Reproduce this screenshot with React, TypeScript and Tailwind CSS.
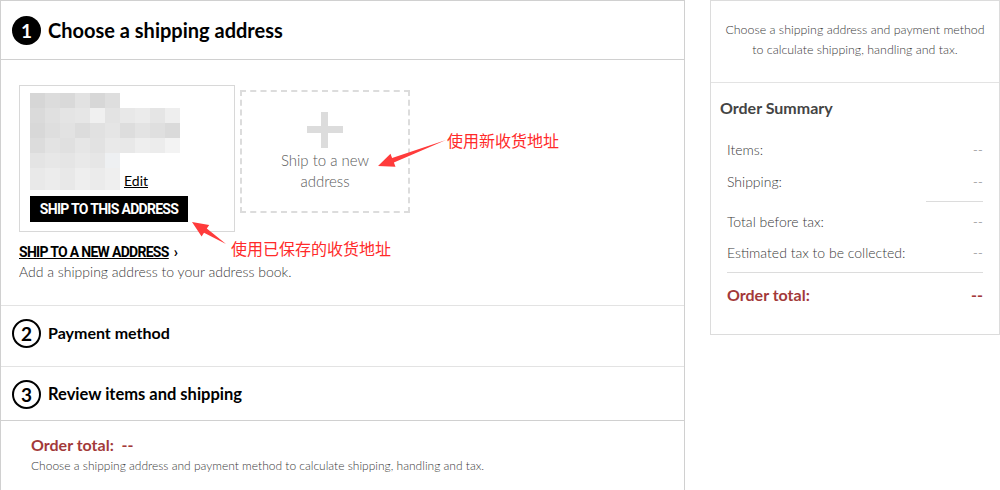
import React from "react";

const mosaicRows: string[][] = [
  ["#d6d6d6", "#dcdcdc", "#d9d9d9", "#e2e2e2", "#d7d7d7", "#dedede"],
  ["#dadada", "#e0e0e0", "#e4e4e4", "#e6e6e6", "#f0f0f0", "#e3e3e3", "#e8e8e8", "#ebebeb", "#e5e5e5", "#eeeeee"],
  ["#d8d8d8", "#dedede", "#e2e2e2", "#dcdcdc", "#e1e1e1", "#e5e5e5", "#dddddd", "#e3e3e3", "#dfdfdf", "#dadada"],
  ["#dcdcdc", "#e3e3e3", "#e0e0e0", "#e6e6e6", "#e2e2e2", "#e9e9e9", "#e8e8e8", "#eeeeee", "#ececec", "#f3f3f3"],
  ["#e4e4e4", "#e7e7e7", "#e5e5e5", "#e9e9e9", "#e6e6e6", "#eef0f2"],
  ["#e9e9e9", "#ececec", "#e8e8e8", "#eeeeee", "#ebebeb", "#efefef"],
];

const StepHeader = ({ n, title, filled, size }: { n: number; title: string; filled?: boolean; size: string }) => (
  <div className="flex flex-row items-center">
    <span
      className={`ml-[11px] flex h-[29px] w-[29px] items-center justify-center rounded-full text-[19px] font-bold leading-none ${
        filled ? "bg-black text-white" : "border-2 border-black text-black"
      }`}
    >
      {n}
    </span>
    <h2 className={`ml-[7px] font-bold text-black ${size}`}>{title}</h2>
  </div>
);

const SummaryRow = ({ label, className = "" }: { label: string; className?: string }) => (
  <div className={`flex flex-row justify-between text-[14px] font-light text-[#3a3a3a] ${className}`}>
    <span>{label}</span>
    <span className="text-[#777]">--</span>
  </div>
);

export default function App() {
  return (
    <div className="relative h-[490px] w-[1000px] overflow-hidden bg-white font-['Lato','Liberation_Sans',sans-serif]">
      <div className="flex flex-row items-start">
        {/* left column */}
        <div className="w-[685px] border-l border-r border-t border-[#d0d0d0]">
          <div className="flex h-[59px] items-center border-b border-[#d0d0d0]">
            <StepHeader n={1} title="Choose a shipping address" filled size="text-[20px]" />
          </div>

          <div className="h-[246px] border-b border-[#e3e3e3] pl-[18px] pt-[25px]">
            <div className="flex flex-row items-start">
              <div className="w-[216px] border border-[#d8d8d8] px-[10px] pb-[9px] pt-[7px]">
                <div className="flex flex-col">
                  {mosaicRows.map((row, i) => (
                    <div key={i} className="flex flex-row items-end">
                      {row.map((c, j) => (
                        <div
                          key={j}
                          className={`w-[15px] ${i === 5 ? "h-[22px]" : "h-[15px]"}`}
                          style={{ backgroundColor: c }}
                        />
                      ))}
                      {i === 5 && (
                        <a className="ml-[4px] text-[14px] leading-[18px] text-black underline">Edit</a>
                      )}
                    </div>
                  ))}
                </div>
                <button className="mt-[6px] flex h-[26px] w-[158px] items-center justify-center bg-black font-['Roboto',sans-serif] text-[14px] font-bold uppercase tracking-[-0.7px] text-white">
                  Ship to this address
                </button>
              </div>

              <div className="ml-[5px] mt-[5px] flex h-[123px] w-[170px] flex-col items-center border-2 border-dashed border-[#dcdcdc] pt-[20px]">
                <div className="relative h-[36px] w-[36px]">
                  <div className="absolute left-0 top-[14px] h-[7px] w-[36px] bg-[#dcdcdc]" />
                  <div className="absolute left-[14px] top-0 h-[36px] w-[7px] bg-[#dcdcdc]" />
                </div>
                <p className="mt-[2px] text-center text-[15px] font-light leading-[21px] text-[#5a5a5a]">
                  Ship to a new
                  <br />
                  address
                </p>
              </div>
            </div>

            <a className="mt-[10px] inline-block font-['Roboto',sans-serif] text-[14px] font-bold uppercase tracking-[-0.7px] text-black">
              <span className="underline">Ship to a new address</span>
              <span className="ml-[5px]">›</span>
            </a>
            <p className="text-[14px] font-light leading-[18px] text-[#3a3a3a]">Add a shipping address to your address book.</p>
          </div>

          <div className="flex h-[61px] items-center border-b border-[#e3e3e3] pb-[6px]">
            <StepHeader n={2} title="Payment method" size="text-[16px]" />
          </div>

          <div className="flex h-[54px] items-center border-b border-[#d0d0d0] pt-[1px]">
            <StepHeader n={3} title="Review items and shipping" size="text-[16.5px]" />
          </div>

          <div className="h-[80px] pl-[30px] pt-[13px]">
            <p className="text-[16px] font-bold leading-[22px] text-[#a3393a]">Order total:&nbsp; --</p>
            <p className="mt-px text-[12px] font-light leading-[18px] text-[#3a3a3a]">
              Choose a shipping address and payment method to calculate shipping, handling and tax.
            </p>
          </div>
        </div>

        {/* right column */}
        <aside className="ml-[25px] h-[335px] w-[290px] border border-[#dcdcdc]">
          <div className="flex h-[82px] items-center justify-center border-b border-[#e3e3e3] px-[10px] pb-[4px]">
            <p className="text-center text-[12.4px] font-light leading-[20px] text-[#3a3a3a]">
              Choose a shipping address and payment method
              <br />
              to calculate shipping, handling and tax.
            </p>
          </div>
          <div className="pl-[9px] pr-[16px] pt-[14px]">
            <h3 className="text-[16px] font-bold leading-[22px] text-[#444]">Order Summary</h3>
            <div className="pl-[7px]">
              <SummaryRow label="Items:" className="mt-[21px] leading-[20px]" />
              <SummaryRow label="Shipping:" className="mt-[12px] leading-[20px]" />
              <div className="ml-auto mt-[9px] h-px w-[57px] bg-[#dcdcdc]" />
              <SummaryRow label="Total before tax:" className="mt-[10px] leading-[20px]" />
              <SummaryRow label="Estimated tax to be collected:" className="mt-[11px] leading-[20px]" />
              <div className="mt-[9px] h-px w-full bg-[#dcdcdc]" />
              <div className="mt-[11px] flex flex-row justify-between text-[16px] font-bold leading-[22px] text-[#a3393a]">
                <span>Order total:</span>
                <span>--</span>
              </div>
            </div>
          </div>
        </aside>
      </div>

      {/* annotations drawn over the screenshot */}
      <svg className="pointer-events-none absolute left-0 top-0" width="1000" height="490" viewBox="0 0 1000 490">
        <polygon points="378,166 395.5,166.8 393.9,162.6 446,140 392.1,158 390.5,153.8" fill="#ff3b3b" />
        <polygon points="192,222 209.2,224.9 206.8,228.6 226,244 204,232.8 201.6,236.6" fill="#ff3b3b" />
      </svg>
      <span className="pointer-events-none absolute left-[447px] top-[130px] font-['Noto_Sans_CJK_SC',sans-serif] text-[16px] leading-[20px] text-[#ff2a2a]">
        使用新收货地址
      </span>
      <span className="pointer-events-none absolute left-[231px] top-[238px] font-['Noto_Sans_CJK_SC',sans-serif] text-[16px] leading-[20px] text-[#ff2a2a]">
        使用已保存的收货地址
      </span>
    </div>
  );
}
